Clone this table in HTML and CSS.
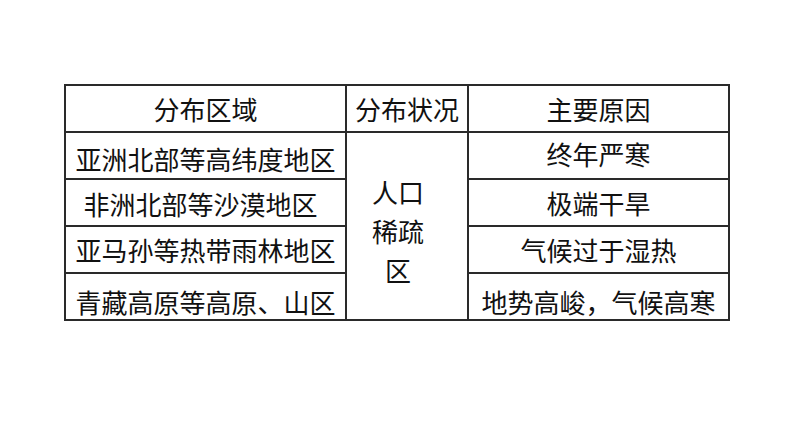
FILE: index.html
```html
<!DOCTYPE html>
<html lang="zh-CN">
<head>
<meta charset="utf-8">
<link rel="stylesheet" href="styles.css">
</head>
<body>
<div class="page">
  <table class="dist">
    <colgroup>
      <col class="c1"><col class="c2"><col class="c3">
    </colgroup>
    <tr class="head">
      <th>分布区域</th>
      <th>分布状况</th>
      <th>主要原因</th>
    </tr>
    <tr>
      <td class="region low">亚洲北部等高纬度地区</td>
      <td class="status" rowspan="4">人口<br>稀疏<br>区</td>
      <td class="reason up">终年严寒</td>
    </tr>
    <tr>
      <td class="region indent">非洲北部等沙漠地区</td>
      <td class="reason">极端干旱</td>
    </tr>
    <tr>
      <td class="region">亚马孙等热带雨林地区</td>
      <td class="reason">气候过于湿热</td>
    </tr>
    <tr>
      <td class="region lower">青藏高原等高原、山区</td>
      <td class="reason lower">地势高峻，气候高寒</td>
    </tr>
  </table>
</div>
</body>
</html>
```

FILE: styles.css
```css
html, body {
  margin: 0;
  padding: 0;
  background: #ffffff;
}
.page {
  padding: 84px 0 0 64px;
}
.dist {
  border-collapse: collapse;
  table-layout: fixed;
  width: 664px;
  font-family: "Noto Sans CJK SC", sans-serif;
  font-size: 26px;
  color: #111;
  font-weight: 400;
}
.c1 { width: 281px; }
.c2 { width: 122px; }
.c3 { width: 261px; }
.dist tr { height: 47px; }
.dist th, .dist td {
  box-sizing: border-box;
  border: 2px solid #2a2a2a;
  height: 47px;
  padding: 0;
  text-align: center;
  vertical-align: middle;
  font-weight: 400;
  line-height: 30px;
  white-space: nowrap;
}
.dist .region.low { padding-top: 6px; }
.dist .region.indent { padding-right: 10px; padding-top: 3px; }
.dist .lower { padding-top: 10px; }
.dist .reason.up { padding-bottom: 4px; }
.dist .status {
  line-height: 39px;
  padding: 8px 18px 0 0;
}
```
